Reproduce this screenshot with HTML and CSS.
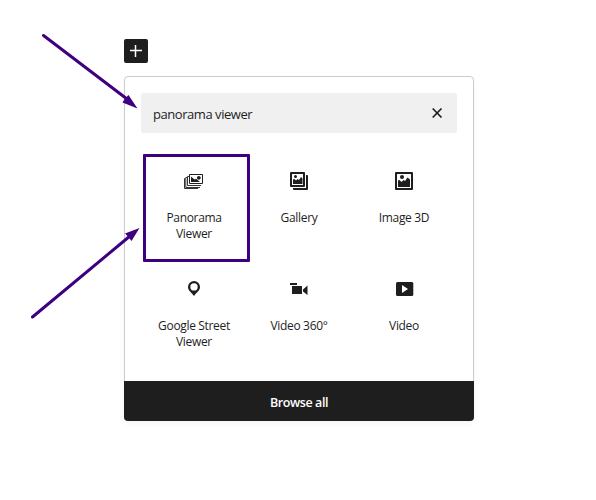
FILE: index.html
```html
<!DOCTYPE html>
<html lang="en">
<head>
<meta charset="utf-8">
<title>Block inserter</title>
<link rel="stylesheet" href="styles.css">
</head>
<body>
<main class="canvas">
  <button class="add" aria-label="Add block"><svg width="24" height="24" viewBox="0 0 24 24"><path d="M6 11.5h12M11.5 6v12" stroke="#fff" stroke-width="1.5"/></svg></button>
  <section class="popover">
    <div class="search">
      <span class="query">panorama viewer</span>
      <svg class="clear" width="12" height="12" viewBox="0 0 12 12"><path d="M1.700 1.500l8.800 9M10.500 1.500l-8.800 9" stroke="#1e1e1e" stroke-width="1.700"/></svg>
    </div>
    <div class="grid">
      <div class="block selected">
        <svg class="icon" width="24" height="24" viewBox="0 0 24 24">
          <g fill="none" stroke="#1e1e1e"><path d="M7.500 5.500h13v9h-13z"/><path d="M7 7.500H5.500v9H19M5 8.500H3.800v10H18M3 9.500H2.500v10H16" stroke-width=".9"/></g>
          <path d="M9 7.500l3.500 3 1.500-.7 4 3.200H9z" fill="#1e1e1e"/><circle cx="16.800" cy="8.800" r="1.900" fill="#1e1e1e"/>
        </svg>
        <span class="label">Panorama Viewer</span>
      </div>
      <div class="block">
        <svg class="icon" width="24" height="24" viewBox="0 0 24 24">
          <path d="M4 4h13v13H4z" fill="none" stroke="#1e1e1e" stroke-width="2" stroke-linejoin="round"/><path d="M19 7h1v13H7v-1" fill="none" stroke="#1e1e1e" stroke-width="2" stroke-linejoin="round"/>
          <circle cx="8.500" cy="7.500" r="1.500" fill="#1e1e1e"/><path d="M6 15v-4.500l1.500-.5 1.500 1.500 1.500-1.500 1.500 1 2-3 1.500 1.500V15z" fill="#1e1e1e"/>
        </svg>
        <span class="label">Gallery</span>
      </div>
      <div class="block">
        <svg class="icon" width="24" height="24" viewBox="0 0 24 24">
          <path d="M4 4h16v16H4z" fill="none" stroke="#1e1e1e" stroke-width="2" stroke-linejoin="round"/><circle cx="10" cy="8" r="2" fill="#1e1e1e"/><path d="M6 18v-6.500l1.500-.5 2 2 2-2 1.500 1 2.500-3.500L18 10.500V18z" fill="#1e1e1e"/>
        </svg>
        <span class="label">Image 3D</span>
      </div>
      <div class="block">
        <svg class="icon" width="24" height="24" viewBox="0 0 24 24"><path fill="#1e1e1e" fill-rule="evenodd" d="M12 4a6 6 0 0 0-6 6c0 3.500 3.500 5.500 6 9 2.500-3.500 6-5.500 6-9a6 6 0 0 0-6-6zm0 2.200a3.700 3.700 0 1 1 0 7.400 3.700 3.700 0 0 1 0-7.400z"/></svg>
        <span class="label">Google Street Viewer</span>
      </div>
      <div class="block">
        <svg class="icon" width="24" height="24" viewBox="0 0 24 24"><path fill="#1e1e1e" d="M3 6h7v2H3zM5 9h10v8H5zM16 12.500l4.500-4V18L16 14.500z"/></svg>
        <span class="label">Video 360°</span>
      </div>
      <div class="block">
        <svg class="icon" width="24" height="24" viewBox="0 0 24 24"><rect x="4" y="5" width="17.300" height="14" rx="1.500" fill="#1e1e1e"/><path d="M10 8v8l6-4z" fill="#fff"/></svg>
        <span class="label">Video</span>
      </div>
    </div>
    <button class="browse">Browse all</button>
  </section>
  <svg class="arrows" width="596" height="500" viewBox="0 0 596 500">
    <g stroke="#3f007f" stroke-width="3" stroke-linecap="round"><path d="M43.500 35.500L127 99M32.500 317L130 236"/></g>
    <path fill="#3f007f" d="M137.500 108.500L122.500 102.500 125 98.500 128.500 95zM139.500 228L125 233.500 128 236.500 131.500 241z"/>
  </svg>
</main>
</body>
</html>
```

FILE: styles.css
```css
* { box-sizing: border-box; }
body { margin: 0; background: #fff; color: #1e1e1e; font-family: "Open Sans", sans-serif; }
button { border: 0; padding: 0; background: #1e1e1e; color: #fff; font-family: inherit; }
.canvas { position: relative; height: 500px; padding: 39px 0 0 124px; overflow: hidden; }
.add { display: block; width: 24px; height: 24px; border-radius: 2px; }
.add svg { display: block; }
.popover { display: flex; flex-direction: column; width: 350px; height: 345px; margin-top: 13px; border: 1px solid #ccc; border-radius: 4px; box-shadow: 0 3px 6px rgba(0,0,0,.04); }
.search { display: flex; align-items: center; justify-content: space-between; height: 40px; margin: 16px 16px 21px; padding: 2px 14px 0 12px; border-radius: 2px; background: #f0f0f0; }
.query { font-size: 13px; letter-spacing: -.45px; }
.clear { margin-top: -2px; }
.grid { display: grid; grid-template-columns: 106px 104px 106px; grid-auto-rows: 108px; margin: 0 16px; }
.block { display: flex; flex-direction: column; align-items: center; min-width: 0; padding: 15px 8px 0; }
.selected { width: 107px; margin-left: 2px; padding: 12px 10px 0 5px; border: 3px solid #3f007f; border-radius: 1px; }
.icon { flex: none; }
.label { margin-top: 17px; font-size: 12px; line-height: 16px; letter-spacing: -.33px; text-align: center; }
.browse { height: 40px; margin: auto -1px -1px; padding-top: 2px; border-radius: 0 0 4px 4px; font-size: 12.5px; font-weight: 600; letter-spacing: -.4px; }
.arrows { position: absolute; top: 0; left: 0; pointer-events: none; }
```
